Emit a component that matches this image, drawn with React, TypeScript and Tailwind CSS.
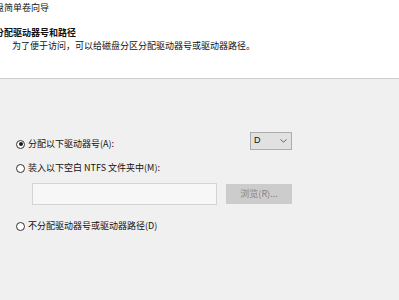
import React from 'react';

function Radio({ checked, label }: { checked?: boolean; label: string }) {
    return (
        <div className="flex items-center gap-[3px] leading-[10px]">
            <span className="w-[9px] h-[9px] rounded-full border border-[#333333] bg-white flex items-center justify-center">
                {checked && <span className="w-[4px] h-[4px] rounded-full bg-[#1a1a1a]" />}
            </span>
            <span>{label}</span>
        </div>
    );
}

export default function App() {
    return (
        <div className="w-[399px] h-[300px] overflow-hidden bg-[#f0f0f0] text-[9px] text-[#111111] font-['Noto_Sans_CJK_SC','Noto_Sans',sans-serif]">
            {/* header */}
            <div className="h-[79px] bg-white border-b border-[#cdcdcd] pt-[3px] whitespace-nowrap">
                <div className="leading-[10px] ml-[-14px]">磁盘简单卷向导</div>
                <div className="leading-[10px] mt-[15px] ml-[-5px] font-bold">分配驱动器号和路径</div>
                <div className="leading-[10px] mt-[3px] pl-[12px]">
                    为了便于访问，可以给磁盘分区分配驱动器号或驱动器路径。
                </div>
            </div>

            {/* body */}
            <div className="whitespace-nowrap">
                <div className="mt-[53px] flex justify-between pl-[16px] pr-[107px]">
                    <div className="pt-[7px]">
                        <Radio checked label="分配以下驱动器号(A):" />
                    </div>
                    <div className="w-[42px] h-[18px] bg-[#e1e1e1] border border-[#adadad] flex items-center justify-between pl-[3px] pr-[4px] font-['Liberation_Sans',sans-serif]">
                        <span>D</span>
                        <svg width="7" height="4" viewBox="0 0 7 4" fill="none">
                            <path d="M0.5 0.5 L3.5 3.2 L6.5 0.5" stroke="#555" strokeWidth="0.9" />
                        </svg>
                    </div>
                </div>

                <div className="mt-[13px] pl-[16px]">
                    <Radio label="装入以下空白 NTFS 文件夹中(M):" />
                </div>

                <div className="mt-[10px] flex items-center pl-[32px] gap-[9px]">
                    <div className="w-[185px] h-[22px] bg-[#f7f7f7] border border-[#d4d4d4]" />
                    <div className="w-[66px] h-[20px] bg-[#cccccc] flex items-center justify-center text-[#838383]">
                        浏览(R)...
                    </div>
                </div>

                <div className="mt-[16px] pl-[16px]">
                    <Radio label="不分配驱动器号或驱动器路径(D)" />
                </div>
            </div>
        </div>
    );
}
